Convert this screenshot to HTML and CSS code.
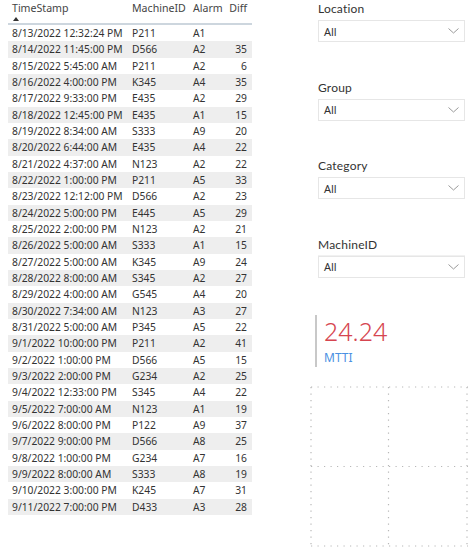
FILE: index.html
```html
<!DOCTYPE html>
<html>
<head>
<meta charset="utf-8">
<link rel="stylesheet" href="styles.css">
</head>
<body>
<div class="page">
  <div class="table">
    <div class="row head">
      <div class="c ts">TimeStamp<span class="sort"></span></div>
      <div class="c mid">MachineID</div>
      <div class="c al">Alarm</div>
      <div class="c df">Diff</div>
    </div>
    <div class="row"><div class="c ts">8/13/2022 12:32:24 PM</div><div class="c mid">P211</div><div class="c al">A1</div><div class="c df"></div></div>
    <div class="row"><div class="c ts">8/14/2022 11:45:00 PM</div><div class="c mid">D566</div><div class="c al">A2</div><div class="c df">35</div></div>
    <div class="row"><div class="c ts">8/15/2022 5:45:00 AM</div><div class="c mid">P211</div><div class="c al">A2</div><div class="c df">6</div></div>
    <div class="row"><div class="c ts">8/16/2022 4:00:00 PM</div><div class="c mid">K345</div><div class="c al">A4</div><div class="c df">35</div></div>
    <div class="row"><div class="c ts">8/17/2022 9:33:00 PM</div><div class="c mid">E435</div><div class="c al">A2</div><div class="c df">29</div></div>
    <div class="row"><div class="c ts">8/18/2022 12:45:00 PM</div><div class="c mid">E435</div><div class="c al">A1</div><div class="c df">15</div></div>
    <div class="row"><div class="c ts">8/19/2022 8:34:00 AM</div><div class="c mid">S333</div><div class="c al">A9</div><div class="c df">20</div></div>
    <div class="row"><div class="c ts">8/20/2022 6:44:00 AM</div><div class="c mid">E435</div><div class="c al">A4</div><div class="c df">22</div></div>
    <div class="row"><div class="c ts">8/21/2022 4:37:00 AM</div><div class="c mid">N123</div><div class="c al">A2</div><div class="c df">22</div></div>
    <div class="row"><div class="c ts">8/22/2022 1:00:00 PM</div><div class="c mid">P211</div><div class="c al">A5</div><div class="c df">33</div></div>
    <div class="row"><div class="c ts">8/23/2022 12:12:00 PM</div><div class="c mid">D566</div><div class="c al">A2</div><div class="c df">23</div></div>
    <div class="row"><div class="c ts">8/24/2022 5:00:00 PM</div><div class="c mid">E445</div><div class="c al">A5</div><div class="c df">29</div></div>
    <div class="row"><div class="c ts">8/25/2022 2:00:00 PM</div><div class="c mid">N123</div><div class="c al">A2</div><div class="c df">21</div></div>
    <div class="row"><div class="c ts">8/26/2022 5:00:00 AM</div><div class="c mid">S333</div><div class="c al">A1</div><div class="c df">15</div></div>
    <div class="row"><div class="c ts">8/27/2022 5:00:00 AM</div><div class="c mid">K345</div><div class="c al">A9</div><div class="c df">24</div></div>
    <div class="row"><div class="c ts">8/28/2022 8:00:00 AM</div><div class="c mid">S345</div><div class="c al">A2</div><div class="c df">27</div></div>
    <div class="row"><div class="c ts">8/29/2022 4:00:00 AM</div><div class="c mid">G545</div><div class="c al">A4</div><div class="c df">20</div></div>
    <div class="row"><div class="c ts">8/30/2022 7:34:00 AM</div><div class="c mid">N123</div><div class="c al">A3</div><div class="c df">27</div></div>
    <div class="row"><div class="c ts">8/31/2022 5:00:00 AM</div><div class="c mid">P345</div><div class="c al">A5</div><div class="c df">22</div></div>
    <div class="row"><div class="c ts">9/1/2022 10:00:00 PM</div><div class="c mid">P211</div><div class="c al">A2</div><div class="c df">41</div></div>
    <div class="row"><div class="c ts">9/2/2022 1:00:00 PM</div><div class="c mid">D566</div><div class="c al">A5</div><div class="c df">15</div></div>
    <div class="row"><div class="c ts">9/3/2022 2:00:00 PM</div><div class="c mid">G234</div><div class="c al">A2</div><div class="c df">25</div></div>
    <div class="row"><div class="c ts">9/4/2022 12:33:00 PM</div><div class="c mid">S345</div><div class="c al">A4</div><div class="c df">22</div></div>
    <div class="row"><div class="c ts">9/5/2022 7:00:00 AM</div><div class="c mid">N123</div><div class="c al">A1</div><div class="c df">19</div></div>
    <div class="row"><div class="c ts">9/6/2022 8:00:00 PM</div><div class="c mid">P122</div><div class="c al">A9</div><div class="c df">37</div></div>
    <div class="row"><div class="c ts">9/7/2022 9:00:00 PM</div><div class="c mid">D566</div><div class="c al">A8</div><div class="c df">25</div></div>
    <div class="row"><div class="c ts">9/8/2022 1:00:00 PM</div><div class="c mid">G234</div><div class="c al">A7</div><div class="c df">16</div></div>
    <div class="row"><div class="c ts">9/9/2022 8:00:00 AM</div><div class="c mid">S333</div><div class="c al">A8</div><div class="c df">19</div></div>
    <div class="row"><div class="c ts">9/10/2022 3:00:00 PM</div><div class="c mid">K245</div><div class="c al">A7</div><div class="c df">31</div></div>
    <div class="row"><div class="c ts">9/11/2022 7:00:00 PM</div><div class="c mid">D433</div><div class="c al">A3</div><div class="c df">28</div></div>
  </div>

  <div class="side">
    <div class="slicer">
      <div class="label">Location</div>
      <div class="box"><span>All</span><svg class="chev" width="11" height="6" viewBox="0 0 11 6"><path d="M0.5 0.5 L5.5 5 L10.5 0.5" fill="none" stroke="#9a9a9a" stroke-width="1"/></svg></div>
    </div>
    <div class="slicer">
      <div class="label">Group</div>
      <div class="box"><span>All</span><svg class="chev" width="11" height="6" viewBox="0 0 11 6"><path d="M0.5 0.5 L5.5 5 L10.5 0.5" fill="none" stroke="#9a9a9a" stroke-width="1"/></svg></div>
    </div>
    <div class="slicer">
      <div class="label">Category</div>
      <div class="box"><span>All</span><svg class="chev" width="11" height="6" viewBox="0 0 11 6"><path d="M0.5 0.5 L5.5 5 L10.5 0.5" fill="none" stroke="#9a9a9a" stroke-width="1"/></svg></div>
    </div>
    <div class="slicer">
      <div class="label line">MachineID</div>
      <div class="box"><span>All</span><svg class="chev" width="11" height="6" viewBox="0 0 11 6"><path d="M0.5 0.5 L5.5 5 L10.5 0.5" fill="none" stroke="#9a9a9a" stroke-width="1"/></svg></div>
    </div>

    <div class="card">
      <div class="value">24.24</div>
      <div class="name">MTTI</div>
    </div>

    <svg class="grid" width="158" height="161" viewBox="0 0 158 161">
      <g stroke="#b8b8b8" stroke-width="1.2" stroke-dasharray="1.2 5.3" fill="none">
        <line x1="1" y1="1" x2="158" y2="1"/>
        <line x1="1" y1="80.5" x2="158" y2="80.5"/>
        <line x1="1" y1="160" x2="158" y2="160"/>
        <line x1="1" y1="1" x2="1" y2="161"/>
        <line x1="78.5" y1="1" x2="78.5" y2="161"/>
        <line x1="157" y1="1" x2="157" y2="161"/>
      </g>
    </svg>
  </div>
</div>
</body>
</html>
```

FILE: styles.css
```css
* { box-sizing: border-box; }
body {
  margin: 0;
  background: #ffffff;
  font-family: "Noto Sans", "Open Sans", sans-serif;
  color: #252423;
}
.page {
  display: flex;
  align-items: flex-start;
}
.table {
  margin-left: 8px;
  width: 244px;
  font-size: 10.3px;
  color: #333333;
}
.row {
  display: flex;
  height: 16.33px;
  align-items: center;
  line-height: 1;
}
.row:nth-child(odd) {
  background: #eeeeee;
}
.row.head {
  background: #ffffff;
  height: 25px;
  align-items: flex-start;
  padding-top: 3px;
  border-bottom: 2px solid #cdd6de;
  color: #444444;
  font-size: 10.6px;
}
.c { white-space: nowrap; }
.ts { width: 124px; padding-left: 4px; position: relative; }
.mid { width: 61px; }
.al { width: 35px; }
.df { width: 24px; text-align: right; padding-right: 5px; }
.sort {
  position: absolute;
  left: 5px;
  top: 14px;
  width: 0;
  height: 0;
  border-left: 3px solid transparent;
  border-right: 3px solid transparent;
  border-bottom: 4px solid #333333;
}
.side {
  margin-left: 54px;
  width: 168px;
  display: flex;
  flex-direction: column;
}
.slicer {
  height: 78.6px;
  padding-left: 12px;
  width: 159px;
}
.label {
  font-family: "Lato", "Noto Sans", sans-serif;
  font-size: 12px;
  color: #333333;
  height: 20px;
  padding-top: 1px;
  letter-spacing: 0.2px;
}
.label.line {
  border-bottom: 1px solid #f1f1f1;
  height: 23px;
  margin-top: -3px;
  padding-top: 4px;
}
.box {
  height: 22px;
  border: 1px solid #e6e6e6;
  display: flex;
  align-items: center;
  justify-content: space-between;
  padding: 0 5px 0 5px;
  font-size: 11px;
  color: #333333;
}
.card {
  margin-top: 1px;
  margin-left: 9px;
  height: 52px;
  border-left: 2px solid #c8c8c8;
  padding-left: 7px;
}
.value {
  font-family: "Noto Sans", sans-serif;
  font-weight: 300;
  font-size: 25px;
  line-height: 32px;
  color: #d64550;
}
.name {
  font-size: 12px;
  color: #4a90e2;
  margin-top: 2px;
}
.grid {
  margin-top: 19px;
  margin-left: 4px;
  display: block;
}
```
